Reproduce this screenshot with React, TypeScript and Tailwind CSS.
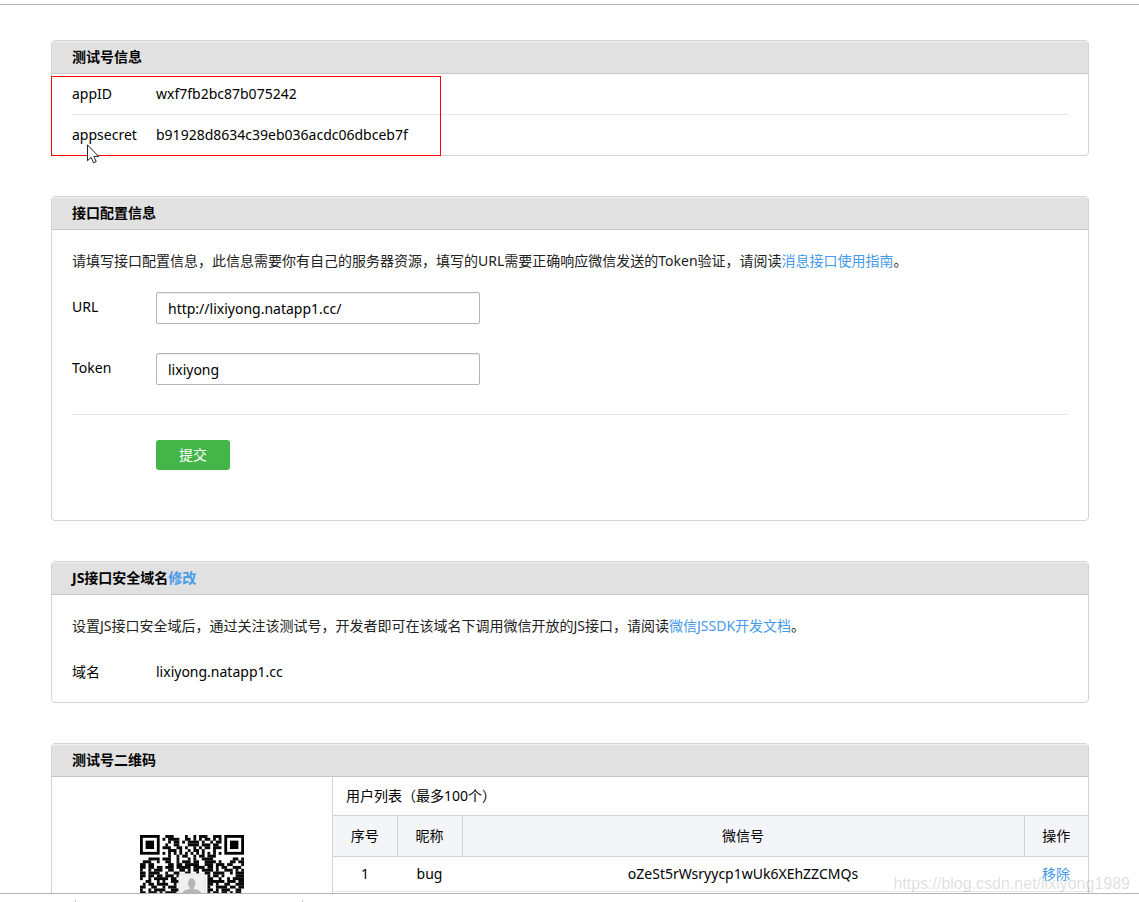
import React, { useState } from 'react';

// One string per module row, the two finder squares are drawn on their own
const qrRows = [
  '.........###....#..#.###..###........',
  '........#.####..##.#.#.##.#.#........',
  '..........#.##.#.####.#..#.##........',
  '.........#..##...####.###.##.........',
  '........###..##.#..#.#.##.###........',
  '..........###.#..#.##.#...#..........',
  '........#.#.#.#.#.#.#.#.#.#.#........',
  '..........#..#.##..#.##.###..........',
  '...####.###..#...#.#..####.......##.#',
  '.###..#..##..#.###.##..####.#...##.##',
  '##.##.....##.##.#####..###.###.##...#',
  '##.##.##.###.#####.####.##.#.##..###.',
  '#..#.###..##..##.#.##.####.#..###.#.#',
  '##.####..#..##..##..#..##.####..#.###',
  '##.##.##.###.#..........#.##.#....###',
  '#..#.#####.##...........##..#..#.####',
  '..##..#.#..####.........######.###.##',
  '.#.##.####..#...........##.#..##..###',
  '##..##..#.###.#.........#..####.##.##',
  '#..#.####..####.........##.#.###..##.',
  '##.###.#.####...........#.##.##.#.##.',
];

const users = [{ id: 1, nickname: 'bug', openid: 'oZeSt5rWsryycp1wUk6XEhZZCMQs' }];

const QrCode = () => (
  <svg viewBox="0 0 37 37" className="w-[104px] h-[104px]" role="img" aria-label="测试号二维码">
    {[0, 30].map((x) => (
      <g key={x}>
        <rect x={x + 0.5} y="0.5" width="6" height="6" fill="none" stroke="#000" />
        <rect x={x + 2} y="2" width="3" height="3" />
      </g>
    ))}
    {qrRows.map((row, y) =>
      [...row.matchAll(/#+/g)].map((run) => (
        <rect key={`${y}-${run.index}`} x={run.index} y={y} width={run[0].length} height="1.05" fill="#0a0a0a" />
      ))
    )}
    <rect x="13.8" y="13.8" width="9.4" height="9.4" rx="1" fill="#f1f1f1" stroke="#ddd" strokeWidth="0.3" />
    <ellipse cx="18.4" cy="17.2" rx="1.3" ry="1.8" fill="#b5b5b5" />
    <path d="M17.8 18h1.200v1.100c1.700.400 2.900.800 2.900 2.200v1h-7v-1c0-1.400 1.200-1.800 2.900-2.200z" fill="#b5b5b5" />
  </svg>
);

const Panel = ({ title, children }: { title: React.ReactNode; children: React.ReactNode }) => (
  <section className="rounded-sm border border-[#d3d3d3]">
    <h2 className="h-[33px] border-t border-b border-t-[#efefef] border-b-[#c6c6c6] bg-[#e1e1e1] px-5 font-bold leading-[29px]">
      {title}
    </h2>
    {children}
  </section>
);

const App = () => {
  const [url, setUrl] = useState('http://lixiyong.natapp1.cc/');
  const [token, setToken] = useState('lixiyong');

  return (
    <div className="relative flex h-screen flex-col overflow-hidden bg-white pt-1 text-sm text-black font-['Noto_Sans','Noto_Sans_CJK_SC',sans-serif]">
      <main className="flex min-h-0 flex-1 flex-col gap-10 overflow-hidden border-t border-b border-[#b4b4b4] pt-[35px] pr-[50px] pl-[51px] *:shrink-0">
        <div className="relative">
          <Panel title="测试号信息">
            <dl className="px-5">
              <div className="flex h-[41px] items-center border-b border-[#e7e7e7]">
                <dt className="w-[84px]">appID</dt>
                <dd>wxf7fb2bc87b075242</dd>
              </div>
              <div className="flex h-10 items-center">
                <dt className="w-[84px]">appsecret</dt>
                <dd>b91928d8634c39eb036acdc06dbceb7f</dd>
              </div>
            </dl>
          </Panel>
          {/* highlight box and mouse pointer */}
          <div className="absolute bottom-0 left-0 h-20 w-[390px] border border-[#f00]" />
          <svg viewBox="0 0 12 20" className="absolute -bottom-2 left-9 h-5 w-3" aria-hidden="true">
            <path d="M.5.800v16l3.600-3.500 2.500 5.500 2.600-1.200-2.400-5.200h4.700z" fill="#fff" stroke="#223" />
          </svg>
        </div>

        <Panel title="接口配置信息">
          <form className="px-5 pt-5 pb-[50px]" onSubmit={(e) => e.preventDefault()}>
            <p className="leading-[22px] text-[#222]">
              请填写接口配置信息，此信息需要你有自己的服务器资源，填写的URL需要正确响应微信发送的Token验证，请阅读
              <a href="#guide" className="text-[#459ae9]">消息接口使用指南</a>。
            </p>
            <div className="mt-5 flex">
              <label htmlFor="url" className="w-[84px] leading-[30px]">URL</label>
              <input
                id="url"
                type="text"
                value={url}
                onChange={(e) => setUrl(e.target.value)}
                className="h-8 w-[324px] rounded-xs border border-[#b4b4b4] px-[11px] shadow-[inset_0_1px_1px_#eee] outline-none"
              />
            </div>
            <div className="mt-[29px] flex">
              <label htmlFor="token" className="w-[84px] leading-[30px]">Token</label>
              <input
                id="token"
                type="text"
                value={token}
                onChange={(e) => setToken(e.target.value)}
                className="h-8 w-[324px] rounded-xs border border-[#b4b4b4] px-[11px] shadow-[inset_0_1px_1px_#eee] outline-none"
              />
            </div>
            <div className="mt-[29px] border-t border-[#e7e7e7] pt-[25px] pl-[84px]">
              <button type="submit" className="block h-[30px] w-[74px] rounded-[3px] bg-[#44b549] text-white">
                提交
              </button>
            </div>
          </form>
        </Panel>

        <Panel title={<>JS接口安全域名<a href="#edit" className="text-[#459ae9]">修改</a></>}>
          <div className="px-5 pt-5 pb-[19px]">
            <p className="leading-[22px] text-[#222]">
              设置JS接口安全域后，通过关注该测试号，开发者即可在该域名下调用微信开放的JS接口，请阅读
              <a href="#jssdk" className="text-[#459ae9]">微信JSSDK开发文档</a>。
            </p>
            <dl className="mt-6 flex leading-[22px]">
              <dt className="w-[84px]">域名</dt>
              <dd>lixiyong.natapp1.cc</dd>
            </dl>
          </div>
        </Panel>

        <Panel title="测试号二维码">
          <div className="flex">
            <div className="flex w-[280px] shrink-0 justify-center pt-[58px] pb-14">
              <QrCode />
            </div>
            <div className="flex-1 border-l border-[#d3d3d3]">
              <h3 className="h-[38px] px-[13px] leading-[38px]">用户列表（最多100个）</h3>
              <table className="w-full table-fixed border-collapse text-center">
                <thead>
                  <tr className="h-[41px] border-y border-[#d3d3d3] bg-[#f4f5f9]">
                    <th className="w-16 border-r border-[#d3d3d3] p-0 font-normal">序号</th>
                    <th className="w-[65px] border-r border-[#d3d3d3] p-0 font-normal">昵称</th>
                    <th className="border-r border-[#d3d3d3] p-0 font-normal">微信号</th>
                    <th className="w-16 p-0 font-normal">操作</th>
                  </tr>
                </thead>
                <tbody>
                  {users.map((user) => (
                    <tr key={user.id} className="h-[35px] border-b border-[#e7e7e7]">
                      <td className="p-0">{user.id}</td>
                      <td className="p-0">{user.nickname}</td>
                      <td className="p-0">{user.openid}</td>
                      <td className="p-0">
                        <a href="#remove" className="text-[#459ae9]">移除</a>
                      </td>
                    </tr>
                  ))}
                </tbody>
              </table>
            </div>
          </div>
        </Panel>
      </main>

      <footer className="flex h-2 shrink-0 items-end">
        <div className="h-0.5 w-[76px] border-r border-[#c8c8c8]" />
        <div className="h-0.5 w-[227px] border-r border-[#c8c8c8]" />
      </footer>

      <span className="absolute right-[9px] bottom-2 text-base leading-5 text-black/15 font-['Liberation_Sans',sans-serif]">
        https://blog.csdn.net/lixiyong1989
      </span>
    </div>
  );
};

export default App;
